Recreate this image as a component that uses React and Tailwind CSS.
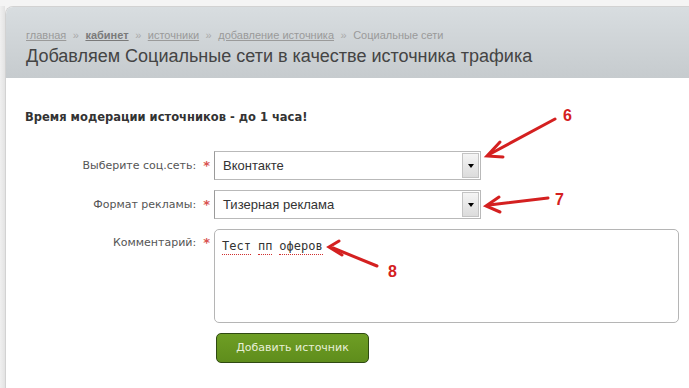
import React from "react";

function Select({ value }) {
  return (
    <div className="flex h-[29px] w-[267px] items-stretch border border-[#b9b9b9] border-l-[#9a9a9a] bg-white">
      <div className="flex flex-1 items-center pl-[8px] text-[13px] text-[#333] [font-family:'Liberation_Sans',Arial,sans-serif]">
        {value}
      </div>
      <div className="my-[1px] mr-[1px] flex w-[17px] items-center justify-center border border-[#c4c4c4] bg-gradient-to-b from-[#f4f4f4] to-[#dcdcdc]">
        <div className="h-0 w-0 border-x-[3.5px] border-t-[4px] border-x-transparent border-t-black" />
      </div>
    </div>
  );
}

function Label({ children }) {
  return (
    <div className="flex items-center justify-end gap-[7px] text-[11px] text-[#555]">
      <span>{children}</span>
      <span className="text-[13px] font-bold text-[#d9534f]">*</span>
    </div>
  );
}

function Word({ children }) {
  return <span className="border-b border-dotted border-[#d03030] pb-[1px]">{children}</span>;
}

export default function App() {
  return (
    <div className="relative h-[388px] w-[689px] overflow-hidden bg-[#f4f4f4] [font-family:Tahoma,'DejaVu_Sans',sans-serif]">
      <div className="flex h-full pt-[6px]">
        <div className="w-[5px] bg-gradient-to-r from-[#f0f0f0] to-[#e3e3e3]" />
        <div className="flex flex-1 flex-col overflow-hidden rounded-tl-[8px] border-l border-t border-[#d2d2d2] bg-white">
          <div className="flex h-[71px] flex-col bg-gradient-to-b from-[#d8dde0] to-[#c6cbce] pl-[20px] pt-[20px]">
            <div className="flex items-center gap-[6.5px] text-[11px] text-[#9a9a9a] [font-family:'Liberation_Sans',Arial,sans-serif]">
              <span className="underline">главная</span>
              <span className="text-[#aaa]">»</span>
              <span className="font-bold text-[#7a7a7a] underline">кабинет</span>
              <span className="text-[#aaa]">»</span>
              <span className="underline">источники</span>
              <span className="text-[#aaa]">»</span>
              <span className="underline">добавление источника</span>
              <span className="text-[#aaa]">»</span>
              <span>Социальные сети</span>
            </div>
            <div className="mt-0 text-[18px] leading-[24px] text-[#444] [font-family:'Liberation_Sans',Arial,sans-serif]">
              Добавляем Социальные сети в качестве источника трафика
            </div>
          </div>
          <div className="flex flex-col pl-[19px] pt-[31px]">
            <div className="text-[11.5px] font-bold text-[#333]">
              Время модерации источников - до 1 часа!
            </div>
            <div className="mt-[25px] grid grid-cols-[185px_auto] gap-x-[4px] gap-y-[10px]">
              <Label>Выберите соц.сеть:</Label>
              <Select value="Вконтакте" />
              <Label>Формат рекламы:</Label>
              <Select value="Тизерная реклама" />
              <div className="flex items-start justify-end pt-[4px]">
                <div className="flex items-center gap-[7px] text-[11px] text-[#555]">
                  <span>Комментарий:</span>
                  <span className="text-[13px] font-bold text-[#d9534f]">*</span>
                </div>
              </div>
              <div className="h-[94px] w-[465px] rounded-[5px] border border-[#b5b5b5] bg-white px-[7px] pt-[9px]">
                <div className="flex items-start gap-[7px] text-[12px] leading-[14px] text-[#333] [font-family:'DejaVu_Sans_Mono',monospace]">
                  <Word>Тест</Word>
                  <Word>пп</Word>
                  <Word>оферов</Word>
                </div>
              </div>
              <div />
              <div className="pl-[2px]">
                <div className="flex h-[30px] w-[153px] items-center justify-center rounded-[5px] border border-[#2f4a12] bg-gradient-to-b from-[#6e9e24] to-[#5f8d1c] text-[11px] text-[#e8f0d8]">
                  Добавить источник
                </div>
              </div>
            </div>
          </div>
        </div>
      </div>

      <svg className="pointer-events-none absolute left-0 top-0" width="689" height="388" viewBox="0 0 689 388">
        <g stroke="#d42020" strokeWidth="3" strokeLinecap="round" fill="none">
          <line x1="555" y1="119" x2="490" y2="154" />
          <polyline points="500,142 487,156 503,157" />
          <line x1="548" y1="198" x2="489" y2="205" />
          <polyline points="499,197 486,206 500,212" />
          <line x1="377" y1="266" x2="333" y2="248" />
          <polyline points="339,241 329,247 342,255" />
        </g>
        <g fill="#d42020" fontFamily="Liberation Sans, Arial, sans-serif" fontWeight="bold" fontSize="16">
          <text x="563" y="121">6</text>
          <text x="555" y="205">7</text>
          <text x="388" y="277">8</text>
        </g>
      </svg>
    </div>
  );
}
